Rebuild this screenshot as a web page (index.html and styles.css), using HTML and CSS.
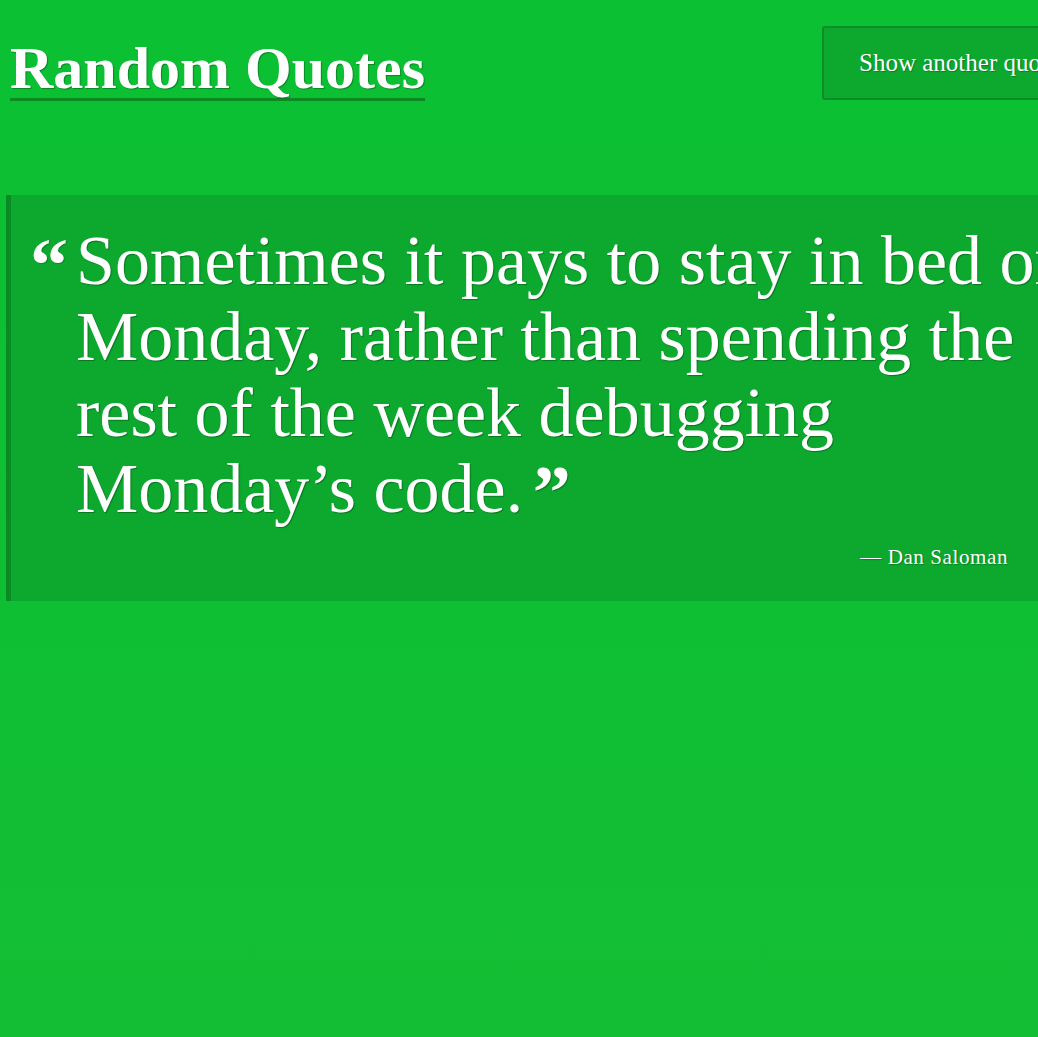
FILE: index.html
```html
<!DOCTYPE html>
<html lang="en">
<head>
<meta charset="utf-8">
<title>Random Quotes</title>
<link rel="stylesheet" href="styles.css">
</head>
<body>
  <header class="header">
    <h1 class="title">Random Quotes</h1>
    <button class="next-btn" type="button">Show another quote</button>
  </header>
  <main class="main">
    <blockquote class="quote">
      <div class="quote-body">
        <span class="quote-open">“</span>
        <p class="quote-text">Sometimes it pays to stay in bed on Monday, rather than spending the rest of the week debugging Monday’s code. <span class="quote-close">”</span></p>
      </div>
      <footer class="quote-author">— Dan Saloman</footer>
    </blockquote>
  </main>
</body>
</html>
```

FILE: styles.css
```css
html {
  overflow: hidden;
  height: 100%;
}

body {
  margin: 0;
  min-height: 100%;
  background: linear-gradient(180deg, #0bc032 0%, #0fbf33 60%, #14be34 100%);
  color: #ffffff;
  font-family: "Liberation Serif", "Times New Roman", serif;
}

.header {
  display: flex;
  align-items: flex-start;
  width: 1086px;
  padding: 26px 10px 0 10px;
}

.title {
  margin: 12px 0 0 0;
  font-size: 60px;
  line-height: 60px;
  font-weight: 700;
  border-bottom: 3px solid #0b8a24;
  text-shadow: 1px 1px 1px rgba(0, 0, 0, 0.3);
}

.next-btn {
  margin-left: auto;
  height: 74px;
  padding: 0 35px;
  background: #0ca92e;
  color: #ffffff;
  border: 2px solid #0a8f26;
  border-radius: 3px;
  font-family: "Liberation Serif", "Times New Roman", serif;
  font-size: 25px;
  text-shadow: 1px 1px 1px rgba(0, 0, 0, 0.25);
  white-space: nowrap;
}

.main {
  padding-top: 94px;
}

.quote {
  margin: 0 0 0 6px;
  padding: 28px 30px 31px 19px;
  background: #0ca92e;
  border-left: 5px solid #0a8a22;
}

.quote-body {
  display: flex;
  align-items: flex-start;
}

.quote-open {
  width: 46px;
  flex: none;
  font-size: 76px;
  font-weight: 700;
  line-height: 76px;
  margin-top: 4px;
  text-shadow: 1px 1px 1px rgba(0, 0, 0, 0.2);
}

.quote-text {
  margin: 0;
  width: 1040px;
  flex: none;
  font-size: 70px;
  line-height: 76px;
  text-shadow: 1px 1px 1px rgba(0, 0, 0, 0.3);
}

.quote-close {
  font-weight: 700;
  font-size: 76px;
  line-height: 0;
  vertical-align: -6px;
  margin-left: -8px;
}

.quote-author {
  margin-top: 18px;
  text-align: right;
  font-size: 21px;
  letter-spacing: 0.6px;
  text-shadow: 1px 1px 1px rgba(0, 0, 0, 0.25);
}
```
